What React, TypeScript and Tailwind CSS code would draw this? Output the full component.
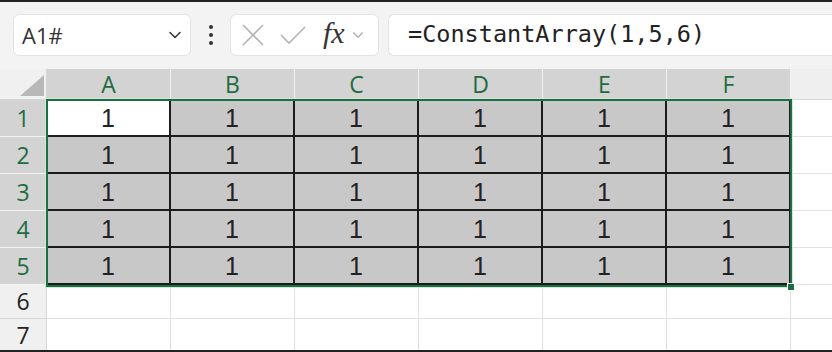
import { ChevronDown } from "lucide-react"

const cols = ["A", "B", "C", "D", "E", "F"]
const rows = [1, 2, 3, 4, 5, 6, 7]

function Cell({ row, col }: { row: number; col: number }) {
  const inSel = row <= 5
  if (!inSel) {
    return <div className="border-r border-b border-[#e1e1e1] bg-white" />
  }
  const active = row === 1 && col === 0
  return (
    <div
      className={`flex items-center justify-center pt-[2px] border-r-2 border-b-2 border-[#1c1c1c] text-[25px] leading-none text-[#222] ${
        active ? "bg-white" : "bg-[#c8c8c8]"
      }`}
      style={{ fontFamily: '"Liberation Sans", Arial, sans-serif' }}
    >
      1
    </div>
  )
}

export default function App() {
  return (
    <div
      className="w-[832px] h-[352px] overflow-hidden bg-[#f3f3f3] border-t-2 border-b-2 border-[#222] flex flex-col"
      style={{ fontFamily: '"Open Sans", "Noto Sans", sans-serif' }}
    >
      {/* Formula bar */}
      <div className="h-[67px] shrink-0 flex items-start pt-[12px] pl-[13px]">
        <div className="w-[178px] h-[42px] bg-white rounded-[6px] border border-[#e3e3e3] flex items-center justify-between pl-[8px] pr-[5px]">
          <span className="text-[22px] text-[#333]">A1#</span>
          <ChevronDown className="w-[20px] h-[20px] text-[#333]" strokeWidth={1.8} />
        </div>
        <div className="w-[39px] h-[42px] flex flex-col items-center justify-center gap-[4px]">
          <span className="w-[4px] h-[4px] rounded-full bg-[#333]" />
          <span className="w-[4px] h-[4px] rounded-full bg-[#333]" />
          <span className="w-[4px] h-[4px] rounded-full bg-[#333]" />
        </div>
        <div className="w-[149px] h-[42px] bg-white rounded-[6px] border border-[#e3e3e3] flex items-center pl-[10px]">
          <svg width="24" height="24" viewBox="0 0 24 24" className="text-[#b5b5b5]">
            <path d="M2 2 L22 22 M22 2 L2 22" stroke="currentColor" strokeWidth="1.6" fill="none" />
          </svg>
          <svg width="28" height="22" viewBox="0 0 28 22" className="ml-[14px] text-[#b5b5b5]">
            <path d="M2 11 L10 19 L26 3" stroke="currentColor" strokeWidth="1.6" fill="none" />
          </svg>
          <span
            className="ml-[16px] text-[30px] italic text-[#333] leading-none -mt-[4px]"
            style={{ fontFamily: '"Liberation Serif", "Times New Roman", serif' }}
          >
            fx
          </span>
          <ChevronDown className="ml-[4px] w-[18px] h-[18px] text-[#aaa]" strokeWidth={1.5} />
        </div>
        <div className="ml-[9px] flex-1 h-[42px] bg-white rounded-l-[6px] border border-r-0 border-[#e3e3e3] flex items-center pl-[19px]">
          <span
            className="text-[23.5px] text-[#222] leading-none"
            style={{ fontFamily: '"DejaVu Sans Mono", "Liberation Mono", monospace' }}
          >
            =ConstantArray(1,5,6)
          </span>
        </div>
      </div>

      {/* Grid */}
      <div className="relative flex-1">
        <div className="grid grid-cols-[47px_repeat(6,124px)_1fr] grid-rows-[31px_repeat(5,37px)_34px_34px]">
          {/* corner */}
          <div className="bg-[#f0f0f0] border-r border-b border-[#d6d6d6] flex items-end justify-end pr-[2px] pb-[3px]">
            <svg width="24" height="21" viewBox="0 0 24 21">
              <path d="M24 0 L24 21 L0 21 Z" fill="#b8b8b8" />
            </svg>
          </div>
          {cols.map((c) => (
            <div
              key={c}
              className="bg-[#d3d3d3] border-r border-[#f2f2f2] flex items-center justify-center text-[23px] text-[#1e6b40]"
            >
              {c}
            </div>
          ))}
          <div className="bg-[#efefef] border-b border-[#d6d6d6]" />

          {rows.map((r) => (
            <>
              <div
                key={`h${r}`}
                className={`flex items-center justify-center text-[23px] border-b border-r ${
                  r <= 5
                    ? "bg-[#d3d3d3] text-[#1e6b40] border-[#f2f2f2]"
                    : "bg-[#f0f0f0] text-[#222] border-[#d6d6d6]"
                }`}
              >
                {r}
              </div>
              {cols.map((c, ci) => (
                <Cell key={`${c}${r}`} row={r} col={ci} />
              ))}
              <div key={`x${r}`} className="bg-white border-b border-[#e1e1e1]" />
            </>
          ))}
        </div>

        {/* selection outline */}
        <div className="absolute left-[46px] top-[30px] w-[746px] h-[188px] border-2 border-[#1f6e43] shadow-[0_0_0_1px_#cfe9d8]" />
        <div className="absolute left-[787px] top-[214px] w-[8px] h-[8px] bg-[#1f6e43] border border-white" />
      </div>
    </div>
  )
}
